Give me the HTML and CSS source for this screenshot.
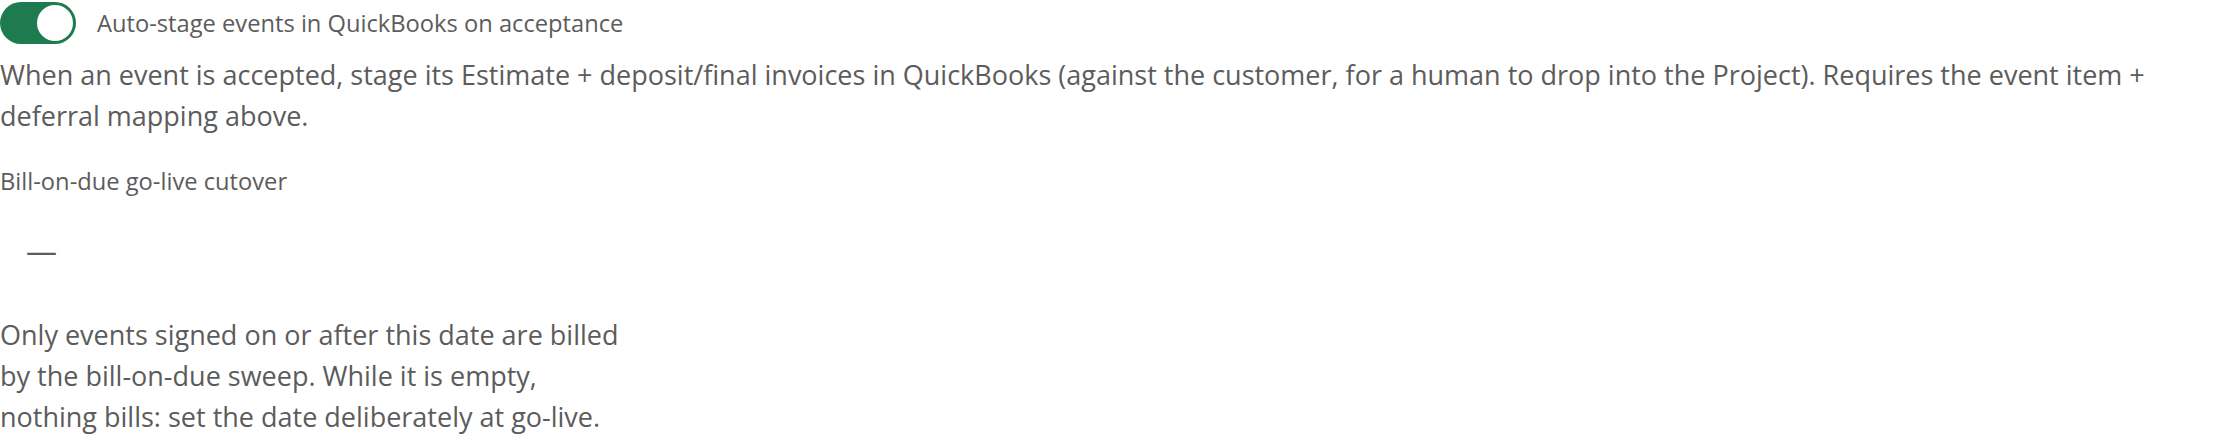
FILE: index.html
```html
<!DOCTYPE html>
<html lang="en">
<head>
<meta charset="utf-8">
<title>QuickBooks settings</title>
<link rel="stylesheet" href="styles.css">
</head>
<body>
  <section class="setting">
    <label class="switch-row">
      <span class="switch"><span class="knob"></span></span>
      <span class="switch-label">Auto-stage events in QuickBooks on acceptance</span>
    </label>
    <p class="hint wide">When an event is accepted, stage its Estimate + deposit/final invoices in QuickBooks (against the customer, for a human to drop into the Project). Requires the event item + deferral mapping above.</p>
  </section>
  <section class="field">
    <div class="field-label">Bill-on-due go-live cutover</div>
    <div class="date-value"><span class="dash">—</span></div>
    <p class="hint narrow">Only events signed on or after this date are billed by the bill-on-due sweep. While it is empty, nothing bills: set the date deliberately at go-live.</p>
  </section>
</body>
</html>
```

FILE: styles.css
```css
html, body {
  margin: 0;
  padding: 0;
  background: #ffffff;
}

body {
  font-family: "Open Sans", "Noto Sans", sans-serif;
  color: #5c5c5c;
}

.switch-row {
  display: flex;
  align-items: center;
  gap: 21px;
  padding-top: 2px;
}

.switch {
  display: flex;
  align-items: center;
  justify-content: flex-end;
  box-sizing: border-box;
  width: 76px;
  height: 42px;
  padding: 0 3px;
  border-radius: 21px;
  background: #1e7a4f;
}

.knob {
  width: 36px;
  height: 36px;
  border-radius: 50%;
  background: #ffffff;
}

.switch-label {
  font-size: 23.7px;
  line-height: 32px;
}

.hint {
  margin: 0;
  font-size: 27px;
  line-height: 41px;
}

.hint.wide {
  margin-top: 10px;
  max-width: 2195px;
}

.field {
  margin-top: 29px;
}

.field-label {
  font-size: 23.7px;
  line-height: 32px;
}

.date-value {
  height: 56px;
  margin-top: 25px;
  padding-left: 26px;
  display: flex;
  align-items: center;
}

.dash {
  font-size: 31px;
  line-height: 1;
}

.hint.narrow {
  margin-top: 36px;
  max-width: 628px;
}
```
